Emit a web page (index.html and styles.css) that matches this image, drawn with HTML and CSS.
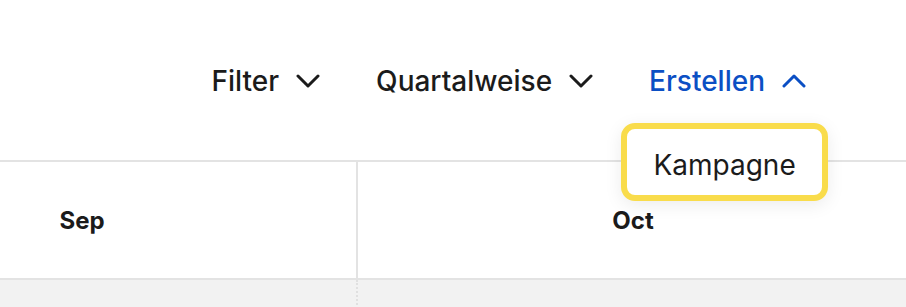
FILE: index.html
```html
<!DOCTYPE html>
<html>
<head>
<meta charset="utf-8">
<link rel="stylesheet" href="styles.css">
</head>
<body>
<div class="page">
  <div class="toolbar">
    <button class="tb-btn">
      <span>Filter</span>
      <svg class="chev" width="24" height="14" viewBox="0 0 24 14"><path d="M2 2 L12 12 L22 2" fill="none" stroke="currentColor" stroke-width="3" stroke-linecap="round" stroke-linejoin="round"/></svg>
    </button>
    <button class="tb-btn">
      <span>Quartalweise</span>
      <svg class="chev" width="24" height="14" viewBox="0 0 24 14"><path d="M2 2 L12 12 L22 2" fill="none" stroke="currentColor" stroke-width="3" stroke-linecap="round" stroke-linejoin="round"/></svg>
    </button>
    <div class="create">
      <button class="tb-btn tb-active">
        <span>Erstellen</span>
        <svg class="chev" width="24" height="14" viewBox="0 0 24 14"><path d="M2 12 L12 2 L22 12" fill="none" stroke="currentColor" stroke-width="3" stroke-linecap="round" stroke-linejoin="round"/></svg>
      </button>
      <div class="menu">
        <div class="menu-item">Kampagne</div>
      </div>
    </div>
  </div>
  <div class="grid">
    <div class="head">
      <div class="col col-first"><span class="month">Sep</span></div>
      <div class="col"><span class="month">Oct</span></div>
    </div>
    <div class="row">
      <div class="cell cell-first"></div>
      <div class="cell"></div>
    </div>
  </div>
</div>
</body>
</html>
```

FILE: styles.css
```css
* { box-sizing: border-box; }
html, body { margin: 0; padding: 0; background: #fff; }
body {
  font-family: Inter, "Noto Sans", sans-serif;
  color: #1b1b1b;
  width: 906px;
  height: 307px;
  overflow: hidden;
}
.page { width: 906px; }
.toolbar {
  height: 160px;
  display: flex;
  justify-content: flex-end;
  align-items: flex-start;
  padding: 60px 100px 0 0;
  gap: 56px;
}
.tb-btn {
  display: flex;
  align-items: center;
  gap: 17px;
  background: none;
  border: 0;
  padding: 0;
  font-family: inherit;
  font-size: 28px;
  font-weight: 500;
  line-height: 42px;
  color: #1b1b1b;
  cursor: pointer;
}
.tb-active { color: #0b4fc4; }
.chev { display: block; }
.create { position: relative; }
.menu {
  position: absolute;
  left: -28px;
  top: 63px;
  width: 207px;
  height: 78px;
  padding-top: 6px;
  background: #fff;
  border: 6px solid #f9dc4b;
  border-radius: 14px;
  box-shadow: 0 4px 18px rgba(0,0,0,0.08);
  display: flex;
  align-items: center;
  justify-content: center;
  z-index: 2;
}
.menu-item {
  font-size: 28px;
  font-weight: 400;
  color: #1b1b1b;
}
.grid {
  border-top: 2px solid #e3e3e3;
  margin-left: -192px;
}
.head {
  display: flex;
  height: 118px;
  border-bottom: 2px solid #e3e3e3;
}
.col {
  width: 550px;
  flex: none;
  display: flex;
  align-items: center;
  justify-content: center;
}
.col-first { border-right: 2px solid #e3e3e3; }
.month {
  font-size: 24px;
  font-weight: 700;
  color: #1b1b1b;
}
.row {
  display: flex;
  height: 40px;
  background: #f2f2f2;
}
.cell { width: 550px; flex: none; }
.cell-first { border-right: 2px dotted #e0e0e0; }
```
